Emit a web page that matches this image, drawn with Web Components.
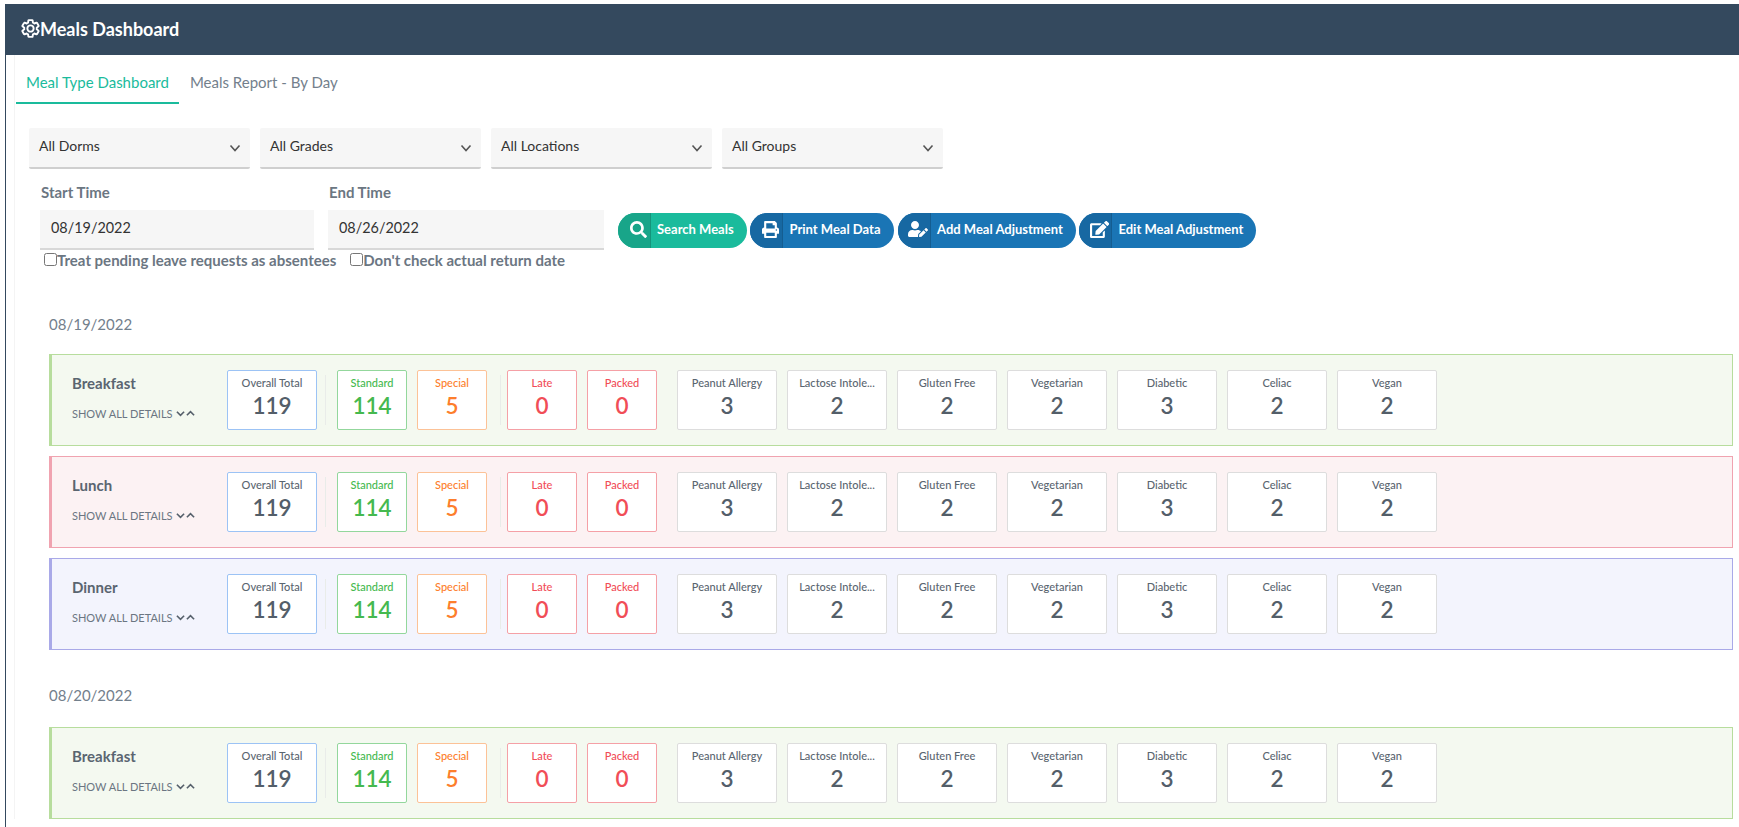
<!DOCTYPE html>
<html lang="en">
<head>
<meta charset="utf-8">
<title>Meals Dashboard</title>
<style>
  html, body { margin: 0; padding: 0; background: #fff; height: 827px; overflow: hidden; }
  body { font-family: Lato, "Noto Sans", sans-serif; color: #5a6570; }
</style>
</head>
<body>

<meals-page>
  <span slot="title">Meals Dashboard</span>
  <dash-tab slot="tabs" active>Meal Type Dashboard</dash-tab>
  <dash-tab slot="tabs">Meals Report - By Day</dash-tab>

  <filter-select slot="filters">All Dorms</filter-select>
  <filter-select slot="filters">All Grades</filter-select>
  <filter-select slot="filters">All Locations</filter-select>
  <filter-select slot="filters">All Groups</filter-select>

  <date-field slot="dates" label="Start Time" style="--field-width: 274px">08/19/2022</date-field>
  <date-field slot="dates" label="End Time" style="--field-width: 276px">08/26/2022</date-field>

  <pill-button slot="actions" tone="green" icon="search" style="--btn-width: 129px; --icon-h: 17px">Search Meals</pill-button>
  <pill-button slot="actions" icon="print" style="--btn-width: 144px; --icon-h: 17px">Print Meal Data</pill-button>
  <pill-button slot="actions" icon="user-edit" style="--btn-width: 178px; --icon-h: 16px">Add Meal Adjustment</pill-button>
  <pill-button slot="actions" icon="edit" style="--btn-width: 177px; --icon-h: 17px">Edit Meal Adjustment</pill-button>

  <check-label slot="checks">Treat pending leave requests as absentees</check-label>
  <check-label slot="checks">Don't check actual return date</check-label>

  <day-section date="08/19/2022">
    <meal-row tone="green" name="Breakfast"></meal-row>
    <meal-row tone="red" name="Lunch"></meal-row>
    <meal-row tone="blue" name="Dinner"></meal-row>
  </day-section>
  <day-section date="08/20/2022">
    <meal-row tone="green" name="Breakfast"></meal-row>
  </day-section>
</meals-page>

<script>
const ICONS = {
  search: ['0 0 512 512', 'M505 442.7L405.3 343c-4.5-4.5-10.6-7-17-7H372c27.6-35.3 44-79.7 44-128C416 93.1 322.9 0 208 0S0 93.1 0 208s93.1 208 208 208c48.3 0 92.7-16.4 128-44v16.3c0 6.4 2.5 12.5 7 17l99.7 99.7c9.4 9.4 24.6 9.4 33.9 0l28.3-28.3c9.4-9.4 9.4-24.6.1-34zM208 336c-70.7 0-128-57.2-128-128 0-70.7 57.2-128 128-128 70.7 0 128 57.2 128 128 0 70.7-57.2 128-128 128z'],
  print: ['0 0 512 512', 'M448 192V77.25c0-8.49-3.37-16.62-9.37-22.63L393.37 9.37c-6-6-14.14-9.37-22.63-9.37H96C78.33 0 64 14.33 64 32v160c-35.35 0-64 28.65-64 64v112c0 8.84 7.16 16 16 16h48v96c0 17.67 14.33 32 32 32h320c17.67 0 32-14.33 32-32v-96h48c8.84 0 16-7.16 16-16V256c0-35.35-28.65-64-64-64zm-64 256H128v-96h256v96zm0-224H128V64h192v48c0 8.84 7.16 16 16 16h48v96zm48 72c-13.25 0-24-10.75-24-24 0-13.26 10.75-24 24-24s24 10.74 24 24c0 13.25-10.75 24-24 24z'],
  'user-edit': ['0 0 640 512', 'M224 256c70.7 0 128-57.3 128-128S294.7 0 224 0 96 57.3 96 128s57.3 128 128 128zm89.6 32h-16.7c-22.2 10.2-46.9 16-72.9 16s-50.6-5.8-72.9-16h-16.7C60.2 288 0 348.2 0 422.4V464c0 26.5 21.5 48 48 48h274.9c-2.4-6.8-3.4-14-2.6-21.3l6.8-60.9 1.2-11.1 7.9-7.9 77.3-77.3c-24.5-27.7-60-45.5-99.9-45.5zm45.3 145.3l-6.8 61c-1.1 10.2 7.5 18.8 17.6 17.6l60.9-6.8 137.9-137.9-71.7-71.7-137.9 137.8zM633 268.9L595.1 231c-9.3-9.3-24.5-9.3-33.8 0l-37.8 37.8-4.1 4.1 71.8 71.7 41.8-41.8c9.3-9.4 9.3-24.5 0-33.9z'],
  edit: ['0 0 576 512', 'M402.6 83.2l90.2 90.2c3.8 3.8 3.8 10 0 13.8L274.4 405.6l-92.8 10.3c-12.4 1.4-22.9-9.1-21.5-21.5l10.3-92.8L388.8 83.2c3.8-3.8 10-3.8 13.8 0zm162-22.9l-48.8-48.8c-15.2-15.2-39.9-15.2-55.2 0l-35.4 35.4c-3.8 3.8-3.8 10 0 13.8l90.2 90.2c3.8 3.8 10 3.8 13.8 0l35.4-35.4c15.2-15.3 15.2-40 0-55.2zM384 346.2V448H64V128h229.8c3.2 0 6.2-1.3 8.5-3.5l40-40c7.6-7.6 2.2-20.5-8.5-20.5H48C21.5 64 0 85.5 0 112v352c0 26.5 21.5 48 48 48h352c26.5 0 48-21.5 48-48V306.2c0-10.7-12.9-16-20.5-8.5l-40 40c-2.2 2.3-3.5 5.3-3.5 8.5z']
};

const pageTmp = document.createElement('template');
pageTmp.innerHTML = `
  <style>
  :host {
      display: block;
      margin: 4px 0 0 5px;
      border-left: 1px solid #34495e;
      min-height: 823px;
      font-family: Lato, "Noto Sans", sans-serif;
  }
  .bar {
      display: flex;
      align-items: center;
      height: 51px;
      margin-left: -1px;
      padding-left: 15px;
      box-sizing: border-box;
      background: #34495e;
      color: #fff;
      font-size: 18px;
      font-weight: 700;
  }
  .bar svg { width: 21px; height: 21px; margin: -2px -1px 0 0; }
  .bar span { margin-top: -2px; }
  .body {
      margin-left: 8px;
      padding-left: 1px;
      border-left: 1px solid #f4f4f4;
  }
  .tabs { display: flex; height: 49px; }
  .filters { display: flex; gap: 10px; margin: 24px 0 0 13px; }
  .form { margin: 11px 0 0 24px; display: flex; align-items: flex-start; gap: 13.5px; }
  .dates { display: flex; gap: 14px; }
  .actions { display: flex; gap: 3.5px; margin-top: 33px; }
  .checks { display: flex; gap: 14px; margin: 1px 0 0 28px; }
  .days { padding: 45px 6px 0 33px; }
  </style>
  <div class="bar">
    <svg viewBox="0 0 24 24" fill="none" stroke="#fff" stroke-width="2.2" stroke-linejoin="round">
      <path d="M19.14 12.94c.04-.3.06-.61.06-.94 0-.32-.02-.64-.07-.94l2.03-1.58c.18-.14.23-.41.12-.61l-1.92-3.32c-.12-.22-.37-.29-.59-.22l-2.39.96c-.5-.38-1.03-.7-1.62-.94l-.36-2.54c-.04-.24-.24-.41-.48-.41h-3.84c-.24 0-.43.17-.47.41l-.36 2.54c-.59.24-1.13.57-1.62.94l-2.39-.96c-.22-.08-.47 0-.59.22L2.74 8.87c-.12.21-.08.47.12.61l2.03 1.58c-.05.3-.09.63-.09.94s.02.64.07.94l-2.03 1.58c-.18.14-.23.41-.12.61l1.92 3.32c.12.22.37.29.59.22l2.39-.96c.5.38 1.03.7 1.62.94l.36 2.54c.05.24.24.41.48.41h3.84c.24 0 .44-.17.47-.41l.36-2.54c.59-.24 1.13-.56 1.62-.94l2.39.96c.22.08.47 0 .59-.22l1.92-3.32c.12-.22.07-.47-.12-.61l-2.01-1.58zM12 15.6c-1.98 0-3.6-1.62-3.6-3.6s1.62-3.6 3.6-3.6 3.6 1.62 3.6 3.6-1.62 3.6-3.6 3.6z"/>
    </svg>
    <span><slot name="title"></slot></span>
  </div>
  <div class="body">
    <div class="tabs"><slot name="tabs"></slot></div>
    <div class="filters"><slot name="filters"></slot></div>
    <div class="form">
      <div class="dates"><slot name="dates"></slot></div>
      <div class="actions"><slot name="actions"></slot></div>
    </div>
    <div class="checks"><slot name="checks"></slot></div>
    <div class="days"><slot></slot></div>
  </div>
  `;

class MealsPage extends HTMLElement {
    constructor() {
      super();
      this.attachShadow({ mode: 'open' }).appendChild(pageTmp.content.cloneNode(true));
    }
}

const tabTmp = document.createElement('template');
tabTmp.innerHTML = `
  <style>
  :host {
      display: block;
      box-sizing: border-box;
      height: 49px;
      padding: 16px 10px 0;
      margin-right: 1px;
      color: #73808c;
      font-size: 15px;
      line-height: 22px;
      border-bottom: 2px solid transparent;
  }
  :host([active]) {
      color: #1abb9c;
      border-bottom-color: #1abb9c;
  }
  </style>
  <slot></slot>
  `;

class DashTab extends HTMLElement {
    constructor() {
      super();
      this.attachShadow({ mode: 'open' }).appendChild(tabTmp.content.cloneNode(true));
    }
}

const selectTmp = document.createElement('template');
selectTmp.innerHTML = `
  <style>
  :host {
      display: flex;
      align-items: center;
      justify-content: space-between;
      box-sizing: border-box;
      width: 221px;
      height: 41px;
      padding: 0 9px 4px 10px;
      background: #f6f6f6;
      border-bottom: 2px solid #cfcfcf;
      border-radius: 2px;
      color: #333;
      font-size: 14px;
  }
  svg { width: 12px; height: 12px; margin-top: 5px; }
  </style>
  <slot></slot>
  <svg viewBox="0 0 12 12" fill="none" stroke="#555" stroke-width="1.6"><path d="M1.5 3.5 6 8.5l4.5-5"/></svg>
  `;

class FilterSelect extends HTMLElement {
    constructor() {
      super();
      this.attachShadow({ mode: 'open' }).appendChild(selectTmp.content.cloneNode(true));
    }
}

const dateTmp = document.createElement('template');
dateTmp.innerHTML = `
  <style>
  :host { display: block; width: var(--field-width, 274px); }
  label {
      display: block;
      padding-left: 1px;
      height: 30px;
      line-height: 24px;
      font-size: 15px;
      font-weight: 700;
      color: #6b7682;
  }
  .box {
      box-sizing: border-box;
      height: 40px;
      padding: 0 11px 3px;
      display: flex;
      align-items: center;
      background: #f6f6f6;
      border-bottom: 2px solid #d8d8d8;
      color: #333;
      font-size: 14.4px;
  }
  </style>
  <label></label>
  <div class="box"><slot></slot></div>
  `;

class DateField extends HTMLElement {
    constructor() {
      super();
      this.attachShadow({ mode: 'open' }).appendChild(dateTmp.content.cloneNode(true));
    }

    connectedCallback() {
      this.shadowRoot.querySelector('label').textContent = this.getAttribute('label');
    }
}

const checkTmp = document.createElement('template');
checkTmp.innerHTML = `
  <style>
  :host {
      display: flex;
      align-items: center;
      height: 18px;
      color: #6b7682;
      font-size: 15px;
      font-weight: 700;
  }
  input { width: 13px; height: 13px; margin: -2px 0 0; }
  </style>
  <input type="checkbox"><slot></slot>
  `;

class CheckLabel extends HTMLElement {
    constructor() {
      super();
      this.attachShadow({ mode: 'open' }).appendChild(checkTmp.content.cloneNode(true));
    }
}

const btnTmp = document.createElement('template');
btnTmp.innerHTML = `
  <style>
  :host {
      --btn-bg: #1a75b5;
      --btn-dark: #1768a2;
      display: flex;
      width: var(--btn-width, 140px);
      height: 35px;
      border-radius: 18px;
      overflow: hidden;
      background: var(--btn-bg);
      color: #fff;
      font-size: 13px;
      font-weight: 700;
      white-space: nowrap;
  }
  :host([tone="green"]) { --btn-bg: #1abb9c; --btn-dark: #18a589; }
  .icon {
      flex: none;
      display: flex;
      align-items: center;
      justify-content: center;
      width: 33px;
      padding: 0 0 3px 9px;
      box-sizing: border-box;
      background: var(--btn-dark);
      border-right: 1px solid rgba(0,0,0,.1);
  }
  svg { flex: none; height: var(--icon-h, 17px); fill: #fff; display: block; }
  .label { flex: 1; display: flex; align-items: center; padding: 0 0 3px 6.5px; }
  </style>
  <div class="icon"></div>
  <div class="label"><slot></slot></div>
  `;

class PillButton extends HTMLElement {
    constructor() {
      super();
      this.attachShadow({ mode: 'open' }).appendChild(btnTmp.content.cloneNode(true));
    }

    connectedCallback() {
      const [box, d] = ICONS[this.getAttribute('icon')];
      this.shadowRoot.querySelector('.icon').innerHTML = `<svg viewBox="${box}"><path d="${d}"/></svg>`;
    }
}

const dayTmp = document.createElement('template');
dayTmp.innerHTML = `
  <style>
  :host { display: block; margin-bottom: 35px; }
  :host(:last-child) { margin-bottom: 0; }
  :host(:last-child) h3 { margin-bottom: 22px; }
  h3 {
      margin: 0 0 20px 0;
      height: 20px;
      line-height: 20px;
      font-size: 15px;
      font-weight: 400;
      color: #73808c;
  }
  </style>
  <h3></h3>
  <slot></slot>
  `;

class DaySection extends HTMLElement {
    constructor() {
      super();
      this.attachShadow({ mode: 'open' }).appendChild(dayTmp.content.cloneNode(true));
    }

    connectedCallback() {
      this.shadowRoot.querySelector('h3').textContent = this.getAttribute('date');
    }
}

const cardTmp = document.createElement('template');
cardTmp.innerHTML = `
  <style>
  :host {
      --line: #dddddd;
      --ink: #535e69;
      --label: #5a6570;
      display: block;
      flex: none;
      box-sizing: border-box;
      width: var(--card-width, 100px);
      height: 60px;
      background: #fff;
      border: 1px solid var(--line);
      border-radius: 2px;
      text-align: center;
      white-space: nowrap;
  }
  :host([tone="total"]) { --line: #9cc3f5; }
  :host([tone="standard"]) { --line: #93d79c; --ink: #45b94f; --label: #45b94f; }
  :host([tone="special"]) { --line: #fcc297; --ink: #fd7e2c; --label: #fd7e2c; }
  :host([tone="alert"]) { --line: #f5a0a6; --ink: #f14d57; --label: #f14d57; }
  .label { margin-top: 4px; height: 15px; line-height: 15px; font-size: 11px; font-weight: 500; color: var(--label); }
  .value { margin-top: 2px; height: 28px; line-height: 28px; font-size: 22.5px; font-weight: 600; color: var(--ink); }
  </style>
  <div class="label"></div>
  <div class="value"></div>
  `;

class StatCard extends HTMLElement {
    constructor() {
      super();
      this.attachShadow({ mode: 'open' }).appendChild(cardTmp.content.cloneNode(true));
    }

    connectedCallback() {
      this.shadowRoot.querySelector('.label').textContent = this.getAttribute('label');
      this.shadowRoot.querySelector('.value').textContent = this.getAttribute('value');
    }
}

const rowTmp = document.createElement('template');
rowTmp.innerHTML = `
  <style>
  :host {
      --line: #b7dd9d;
      --fill: #f4f9f0;
      display: flex;
      box-sizing: border-box;
      height: 92px;
      margin-bottom: 10px;
      padding: 15px 0;
      background: var(--fill);
      border: 1px solid var(--line);
      border-left-width: 3px;
  }
  :host(:last-child) { margin-bottom: 0; }
  :host([tone="red"]) { --line: #f0a3b0; --fill: #fcf2f3; }
  :host([tone="blue"]) { --line: #a9a9e8; --fill: #f3f4fd; }
  .head { flex: none; width: 175px; padding-left: 20px; box-sizing: border-box; }
  .name { height: 18px; line-height: 18px; margin-top: 4px; font-size: 15px; font-weight: 700; color: #5a6570; }
  .more {
      display: flex;
      align-items: center;
      gap: 1px;
      margin-top: 13px;
      height: 16px;
      font-size: 11px;
      color: #6b7682;
      white-space: nowrap;
  }
  .more svg { width: 9px; height: 9px; }
  .more svg:first-of-type { margin-left: 2px; }
  .cards { display: flex; align-items: center; gap: 10px; }
  .sep { flex: none; width: 1px; height: 50px; background: #e9ece9; }
  .sep.a { margin: 0 1px 0 -2px; }
  .sep.b { margin: 0 -4px 0 3px; }
  .gap { flex: none; width: 0; }
  </style>
  <div class="head">
    <div class="name"></div>
    <div class="more">SHOW ALL DETAILS
      <svg viewBox="0 0 10 10" fill="none" stroke="#56606b" stroke-width="1.8"><path d="M1 3l4 4 4-4"/></svg>
      <svg viewBox="0 0 10 10" fill="none" stroke="#56606b" stroke-width="1.8"><path d="M1 7l4-4 4 4"/></svg>
    </div>
  </div>
  <div class="cards"></div>
  `;

const MEAL_CARDS = [
    { label: 'Overall Total', value: 119, tone: 'total', width: 90 },
    { sep: 'a' },
    { label: 'Standard', value: 114, tone: 'standard', width: 70 },
    { label: 'Special', value: 5, tone: 'special', width: 70 },
    { sep: 'b' },
    { label: 'Late', value: 0, tone: 'alert', width: 70 },
    { label: 'Packed', value: 0, tone: 'alert', width: 70 },
    { gap: true },
    { label: 'Peanut Allergy', value: 3 },
    { label: 'Lactose Intole...', value: 2 },
    { label: 'Gluten Free', value: 2 },
    { label: 'Vegetarian', value: 2 },
    { label: 'Diabetic', value: 3 },
    { label: 'Celiac', value: 2 },
    { label: 'Vegan', value: 2 }
];

class MealRow extends HTMLElement {
    constructor() {
      super();
      this.attachShadow({ mode: 'open' }).appendChild(rowTmp.content.cloneNode(true));
    }

    connectedCallback() {
      this.shadowRoot.querySelector('.name').textContent = this.getAttribute('name');
      const holder = this.shadowRoot.querySelector('.cards');
      MEAL_CARDS.forEach(c => {
        if (c.sep || c.gap) {
          const el = document.createElement('div');
          el.className = c.sep ? 'sep ' + c.sep : 'gap';
          holder.appendChild(el);
          return;
        }
        const card = document.createElement('stat-card');
        card.setAttribute('label', c.label);
        card.setAttribute('value', c.value);
        if (c.tone) card.setAttribute('tone', c.tone);
        if (c.width) card.style.setProperty('--card-width', c.width + 'px');
        holder.appendChild(card);
      });
    }
}

customElements.define('meals-page', MealsPage);
customElements.define('dash-tab', DashTab);
customElements.define('filter-select', FilterSelect);
customElements.define('date-field', DateField);
customElements.define('check-label', CheckLabel);
customElements.define('pill-button', PillButton);
customElements.define('day-section', DaySection);
customElements.define('stat-card', StatCard);
customElements.define('meal-row', MealRow);
</script>
</body>
</html>
